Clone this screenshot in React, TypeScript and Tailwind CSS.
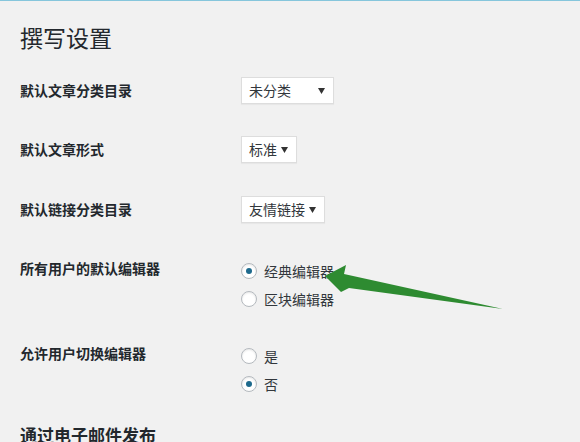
import React from "react";

const font = { fontFamily: '"Noto Sans CJK SC", "Liberation Sans", sans-serif' };

function Select({ value, width }: { value: string; width: string }) {
  return (
    <div
      className={`${width} h-[27px] bg-white border border-[#dddddd] shadow-[0_1px_1px_rgba(0,0,0,0.04)] flex items-center justify-between pl-[7px] pr-[8px] text-[14px] text-[#32373c]`}
    >
      <span>{value}</span>
      <svg width="7" height="6" viewBox="0 0 7 6">
        <polygon points="0,0 7,0 3.5,6" fill="#333" />
      </svg>
    </div>
  );
}

function Radio({ label, checked }: { label: string; checked?: boolean }) {
  return (
    <div className="flex items-center h-[28px]">
      <span className="w-[16px] h-[16px] rounded-full bg-white border border-[#b4b9be] shadow-[inset_0_1px_2px_rgba(0,0,0,0.1)] flex items-center justify-center">
        {checked ? <span className="w-[6px] h-[6px] rounded-full bg-[#1e6a8d]" /> : null}
      </span>
      <span className="ml-[7px] text-[14px] text-[#32373c]">{label}</span>
    </div>
  );
}

export default function App() {
  return (
    <div
      className="relative w-[580px] h-[442px] overflow-hidden bg-[#f1f1f1] border-t border-[#86c6dc] text-[#23282d]"
      style={font}
    >
      <div className="px-[20px] pt-[22px]">
        <h1 className="text-[23px] leading-[29px] font-normal">撰写设置</h1>

        <div className="flex items-center mt-[25px]">
          <div className="w-[221px] text-[14px] font-bold">默认文章分类目录</div>
          <Select value="未分类" width="w-[93px]" />
        </div>

        <div className="flex items-center mt-[32px]">
          <div className="w-[221px] text-[14px] font-bold">默认文章形式</div>
          <Select value="标准" width="w-[56px]" />
        </div>

        <div className="flex items-center mt-[33px]">
          <div className="w-[221px] text-[14px] font-bold">默认链接分类目录</div>
          <Select value="友情链接" width="w-[84px]" />
        </div>

        <div className="flex items-start mt-[34px]">
          <div className="w-[221px] text-[14px] leading-[20px] pt-[1px] font-bold">所有用户的默认编辑器</div>
          <div className="flex flex-col">
            <Radio label="经典编辑器" checked />
            <Radio label="区块编辑器" />
          </div>
        </div>

        <div className="flex items-start mt-[29px]">
          <div className="w-[221px] text-[14px] leading-[20px] pt-[1px] font-bold">允许用户切换编辑器</div>
          <div className="flex flex-col">
            <Radio label="是" />
            <Radio label="否" checked />
          </div>
        </div>

        <h2 className="mt-[25px] text-[17px] leading-[24px] font-bold">通过电子邮件发布</h2>
      </div>

      <svg className="absolute left-0 top-0 pointer-events-none" width="580" height="442" viewBox="0 0 580 442">
        <polygon
          points="325,275 346,264 344,273 503,308 349,287 341,291"
          fill="#2e8b31"
        />
      </svg>
    </div>
  );
}
